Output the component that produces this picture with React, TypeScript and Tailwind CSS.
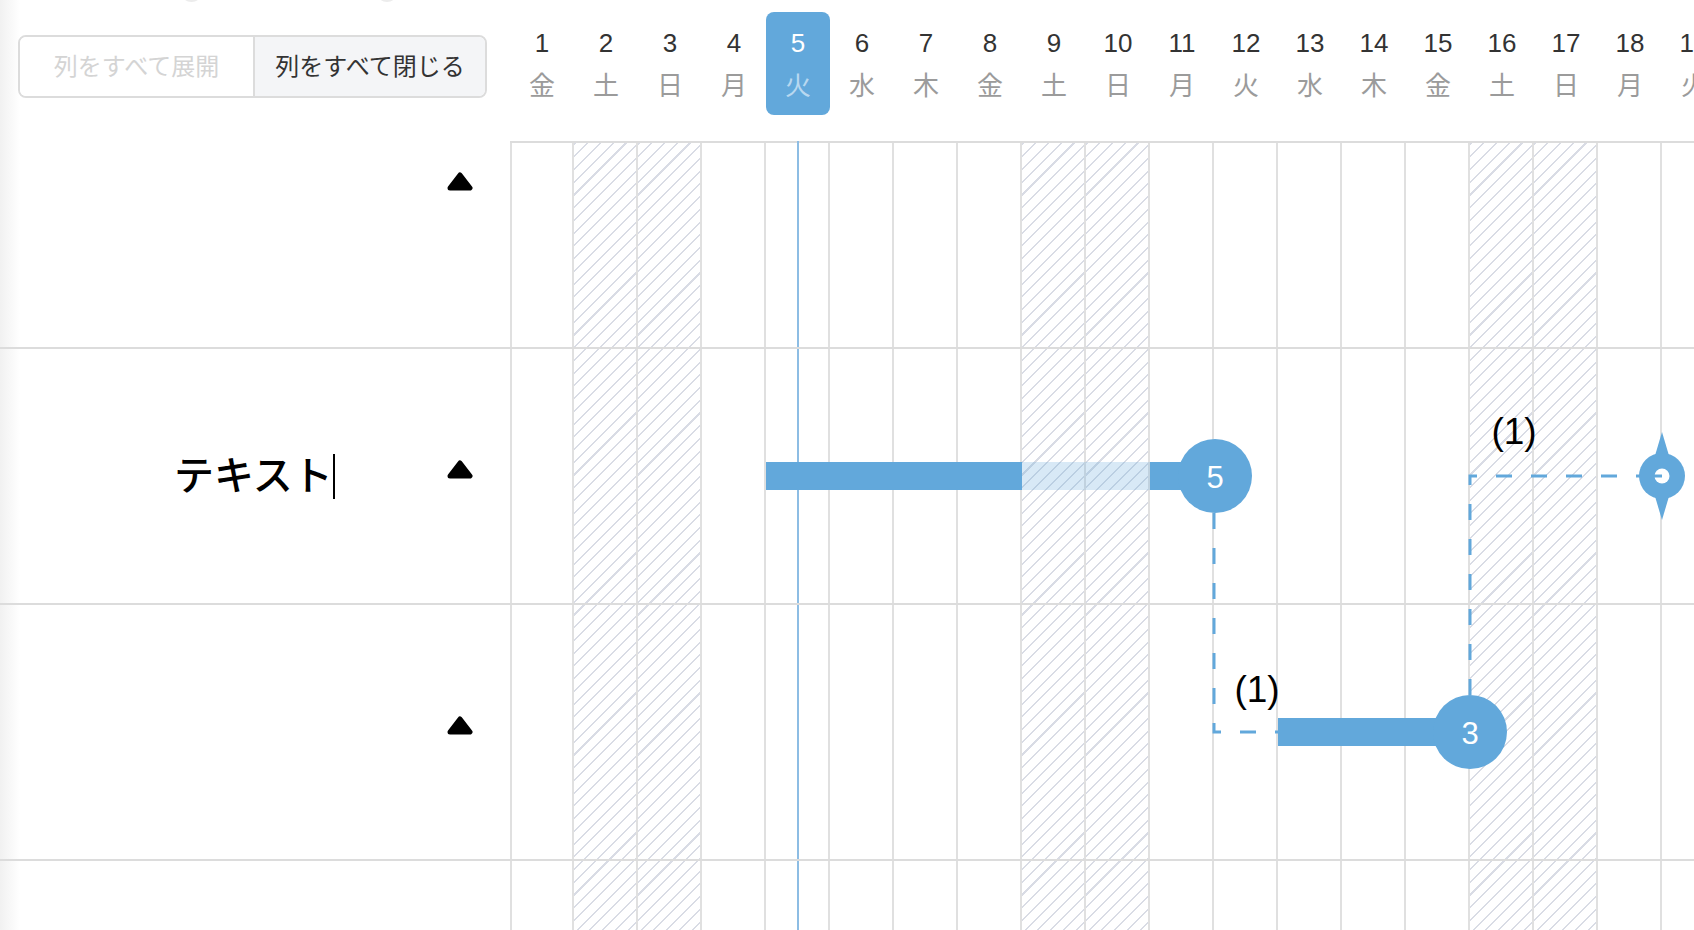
import React from "react";

const FONT = '"Liberation Sans", "Noto Sans CJK JP", sans-serif';
const WEEK = ["金", "土", "日", "月", "火", "水", "木"];
const days = Array.from({ length: 19 }, (_, i) => ({ day: i + 1, wd: WEEK[i % 7] }));
const TODAY = 5;
const BLUE = "#62a8db";

const isOff = (wd: string) => wd === "土" || wd === "日";

function Caret() {
  return (
    <svg width="26" height="19" viewBox="0 0 26 19">
      <polygon points="13,3 23,16 3,16" fill="#000" stroke="#000" strokeWidth="5" strokeLinejoin="round" />
    </svg>
  );
}

const rows = [
  { id: "r1", h: "h-[208px]", caret: "mt-[31px]", label: "" },
  { id: "r2", h: "h-[256px]", caret: "mt-[111px]", label: "テキスト" },
  { id: "r3", h: "h-[256px]", caret: "mt-[111px]", label: "" },
];

function DayHead({ day, wd }: { day: number; wd: string }) {
  const today = day === TODAY;
  return (
    <div className="w-[64px] shrink-0 pt-[12px]">
      <div
        className={`h-[103px] rounded-[8px] flex flex-col items-center pt-[18px] ${today ? "bg-[#62a8db]" : ""}`}
      >
        <span className={`text-[26px] leading-[26px] ${today ? "text-white" : "text-[#333333]"}`}>{day}</span>
        <span className={`mt-[17px] text-[26px] leading-[26px] ${today ? "text-[#b8d8f0]" : "text-[#9b9b9b]"}`}>
          {wd}
        </span>
      </div>
    </div>
  );
}

// bars + dependency lines, body coords (page y - 141)
function Chart() {
  return (
    <svg className="absolute inset-0" width={1694} height={789}>
      {/* task 1 */}
      <rect x={766} y={321} width={256} height={28} fill={BLUE} />
      <rect x={1022} y={321} width={128} height={28} fill={BLUE} fillOpacity={0.25} />
      <rect x={1150} y={321} width={64} height={28} fill={BLUE} />
      <path d="M1214 372 V591 H1278" fill="none" stroke={BLUE} strokeWidth={3} strokeDasharray="16 19" />
      <circle cx={1215} cy={335} r={37} fill={BLUE} />
      <text x={1215} y={336} textAnchor="middle" dominantBaseline="central" fill="#fff" fontSize={31} fontFamily={FONT}>
        5
      </text>

      {/* task 2 */}
      <rect x={1278} y={577} width={192} height={28} fill={BLUE} />
      <path d="M1470 554 V335 H1662" fill="none" stroke={BLUE} strokeWidth={3} strokeDasharray="16 19" />
      <circle cx={1470} cy={591} r={37} fill={BLUE} />
      <text x={1470} y={592} textAnchor="middle" dominantBaseline="central" fill="#fff" fontSize={31} fontFamily={FONT}>
        3
      </text>

      <text x={1257} y={548} textAnchor="middle" dominantBaseline="central" fill="#000" fontSize={37} fontFamily={FONT}>
        (1)
      </text>
      <text x={1514} y={290} textAnchor="middle" dominantBaseline="central" fill="#000" fontSize={37} fontFamily={FONT}>
        (1)
      </text>

      {/* milestone */}
      <polygon points="1654,318 1662,291 1670,318" fill={BLUE} />
      <polygon points="1654,352 1662,379 1670,352" fill={BLUE} />
      <circle cx={1662} cy={335} r={23} fill={BLUE} />
      <circle cx={1662} cy={335} r={7.5} fill="#fff" />
      <line x1={1654} y1={335} x2={1662} y2={335} stroke={BLUE} strokeWidth={3} />
    </svg>
  );
}

export default function App() {
  return (
    <div className="relative w-[1694px] h-[930px] overflow-hidden bg-white flex flex-col" style={{ fontFamily: FONT }}>
      {/* soft left edge */}
      <div className="absolute left-0 top-0 bottom-0 w-[20px] bg-linear-to-r from-[#f1f1f1] to-transparent pointer-events-none" />

      {/* header */}
      <div className="relative flex h-[141px] shrink-0">
        <div className="w-[510px] shrink-0 pl-[18px] pt-[35px]">
          <div className="flex w-[469px] h-[63px] border-2 border-[#dcdcdc] rounded-[8px] overflow-hidden text-[24px]">
            <div className="w-[235px] flex items-center justify-center bg-white text-[#d4d4d4] border-r-2 border-[#dcdcdc]">
              列をすべて展開
            </div>
            <div className="flex-1 flex items-center justify-center bg-[#f4f5f7] text-[#333333]">列をすべて閉じる</div>
          </div>
        </div>
        <div className="flex">
          {days.map((d) => (
            <DayHead key={d.day} day={d.day} wd={d.wd} />
          ))}
        </div>
        <div className="absolute top-[-21px] left-[180px] w-[23px] h-[23px] rounded-full bg-[#ececec]" />
        <div className="absolute top-[-21px] left-[376px] w-[22px] h-[23px] rounded-full bg-[#ececec]" />
      </div>

      {/* body */}
      <div className="relative flex-1 flex">
        <div className="w-[510px] shrink-0" />
        <div className="flex h-full border-t-2 border-[#dcdcdc]">
          {days.map((d) => (
            <div
              key={d.day}
              className={`w-[64px] shrink-0 h-full border-r-2 border-[#e0e0e0] ${d.day === 1 ? "border-l-2" : ""} ${
                isOff(d.wd)
                  ? "bg-[repeating-linear-gradient(135deg,#d9dce5_0px,#d9dce5_1.5px,transparent_1.5px,transparent_9px)]"
                  : ""
              }`}
            />
          ))}
        </div>

        <div className="absolute top-0 bottom-0 left-[797px] w-[2px] bg-[#8dbde4]" />

        <div className="absolute inset-0 flex flex-col">
          {rows.map((r) => (
            <div key={r.id} className={`${r.h} shrink-0 border-b-2 border-[#dcdcdc] flex`}>
              <div className="w-[510px] shrink-0 flex items-center pl-[174px] pr-[37px]">
                {r.label && (
                  <>
                    <span className="text-[40px] leading-none font-medium text-black">{r.label}</span>
                    <span className="w-[2px] h-[45px] bg-black" />
                  </>
                )}
                <div className="flex-1" />
                <div className={`self-start ${r.caret}`}>
                  <Caret />
                </div>
              </div>
            </div>
          ))}
        </div>

        <Chart />
      </div>
    </div>
  );
}
